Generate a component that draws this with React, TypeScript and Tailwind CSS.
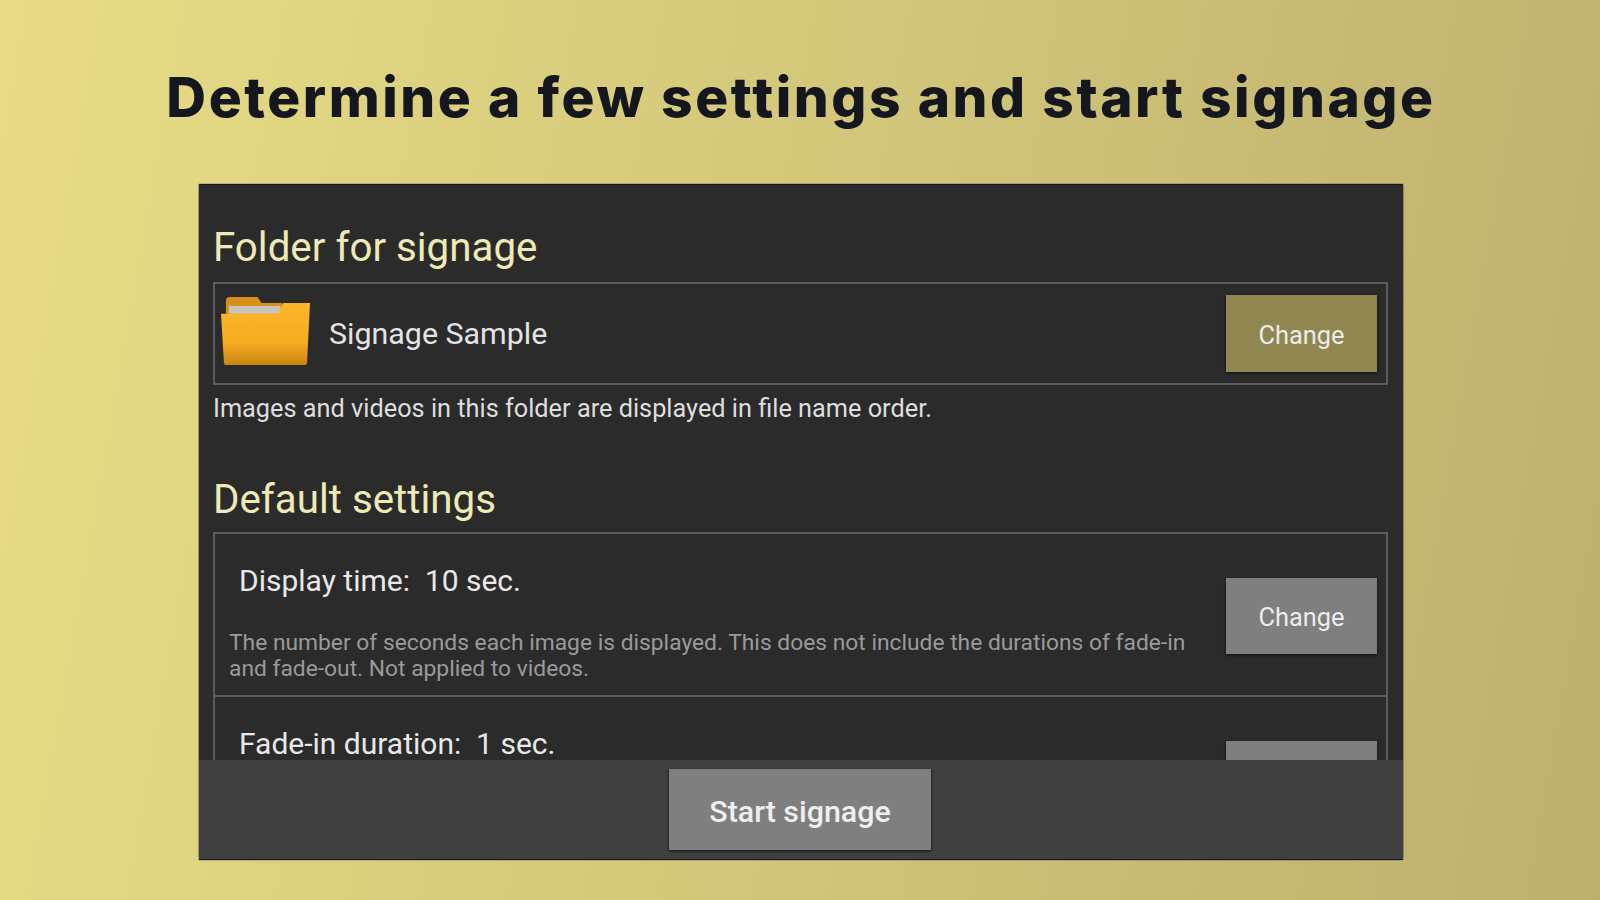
import React from "react";

function FolderIcon() {
  return (
    <svg width="89" height="69" viewBox="0 0 90 70" preserveAspectRatio="none" className="shrink-0 mb-[6px]">
      <defs>
        <linearGradient id="fg" x1="0" y1="0" x2="0" y2="1">
          <stop offset="0" stopColor="#fdb62a" />
          <stop offset="0.65" stopColor="#f6ab20" />
          <stop offset="1" stopColor="#c98412" />
        </linearGradient>
      </defs>
      <path d="M5 5 Q5 1 9 1 H37 L41 7 H62 V20 H5 Z" fill="#d98f17" />
      <rect x="8" y="10" width="52" height="8" fill="#c9c5bb" />
      <path d="M0 18 H57 L63 7 H90 L87 68 Q87 70 85 70 H5 Q3 70 3 68 Z" fill="url(#fg)" />
    </svg>
  );
}

function ChangeButton({ olive, className }: { olive?: boolean; className?: string }) {
  return (
    <div className={`w-[151px] shrink-0 flex items-center justify-center pt-[3px] text-[25.4px] text-[#ececec] shadow-[0_1px_3px_rgba(0,0,0,0.7)] ${olive ? "h-[77px] bg-[#8f8650]" : "h-[76px] bg-[#7f7f7f]"} ${className ?? ""}`}>
      Change
    </div>
  );
}

export default function App() {
  return (
    <div
      className="w-[1600px] h-[900px] flex flex-col items-center overflow-hidden bg-[linear-gradient(100deg,#e8dd85,#bcb06e)]"
      style={{ fontFamily: "Roboto, sans-serif" }}
    >
      <h1
        className="h-[185px] pt-[9px] pl-[2px] flex items-center text-[55px] font-extrabold tracking-[2.55px] text-[#15171f] whitespace-nowrap"
        style={{ fontFamily: "Inter, sans-serif" }}
      >
        Determine a few settings and start signage
      </h1>
      <div className="w-[1204px] h-[674px] ml-[2px] flex flex-col bg-[#2b2b2b] shadow-[0_-1px_1px_#11162b,0_1px_1px_#11162b]">
        <div className="flex-1 min-h-0 overflow-hidden pl-[14px] pr-[15px] pt-[39px]">
          <h2 className="text-[40.3px] leading-[48px] h-[58px] text-[#eeeab5]">Folder for signage</h2>
          <div className="h-[103px] border-2 border-[#5c5c5c] flex items-center pl-[6px] pr-[9px]">
            <FolderIcon />
            <div className="flex-1 pl-[19px] pt-[1px] text-[30.4px] text-[#e4e4e4]">Signage Sample</div>
            <ChangeButton olive />
          </div>
          <p className="text-[25.3px] leading-[30px] mt-[9px] text-[#dedede]">Images and videos in this folder are displayed in file name order.</p>
          <h2 className="text-[40.3px] leading-[48px] h-[56px] mt-[52px] text-[#eeeab5]">Default settings</h2>
          <div className="border-2 border-[#5c5c5c]">
            <div className="h-[163px] border-b-2 border-[#5c5c5c] flex items-start pr-[9px]">
              <div className="flex-1 pl-[14px] pr-[30px] pt-[29px]">
                <div className="pl-[10px] text-[30px] leading-[36px] text-[#e8e8e8] whitespace-pre">Display time:  10 sec.</div>
                <p className="mt-[31px] text-[22.8px] leading-[26px] text-[#9a9a9a]">The number of seconds each image is displayed. This does not include the durations of fade-in and fade-out. Not applied to videos.</p>
              </div>
              <ChangeButton className="mt-[44px]" />
            </div>
            <div className="h-[163px] flex items-start pr-[9px]">
              <div className="flex-1 pl-[14px] pr-[30px] pt-[29px]">
                <div className="pl-[10px] text-[30px] leading-[36px] text-[#e8e8e8] whitespace-pre">Fade-in duration:  1 sec.</div>
              </div>
              <ChangeButton className="mt-[44px]" />
            </div>
          </div>
        </div>
        <div className="h-[99px] shrink-0 bg-[#404040] flex justify-center pt-[9px] pr-[2px]">
          <div className="w-[262px] h-[81px] bg-[#7f7f7f] flex items-center justify-center pt-[4px] text-[30.4px] font-medium text-[#efefef] shadow-[0_1px_3px_rgba(0,0,0,0.7)]">
            Start signage
          </div>
        </div>
      </div>
    </div>
  );
}
